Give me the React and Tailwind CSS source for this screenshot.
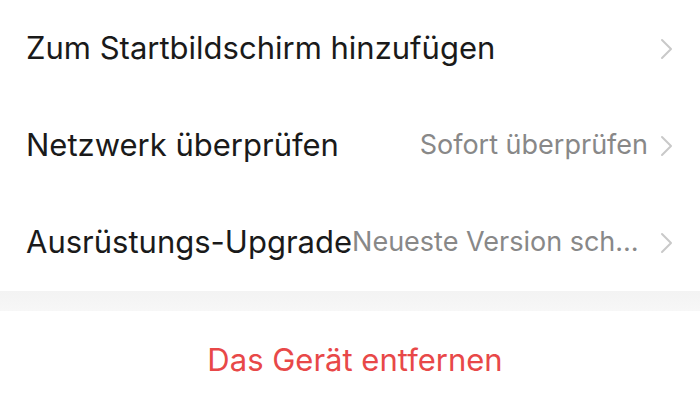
export default function App() {
  const rows = [
    { label: "Zum Startbildschirm hinzufügen", value: "" },
    { label: "Netzwerk überprüfen", value: "Sofort überprüfen" },
    { label: "Ausrüstungs-Upgrade", value: "Neueste Version schon installiert" },
  ];

  return (
    <div className="w-[700px] h-[420px] bg-white overflow-hidden font-['Inter',sans-serif]">
      {/* Settings list */}
      <div className="bg-white">
        {rows.map((row) => (
          <div key={row.label} className="flex items-center h-[97px] pl-[26px] pr-[27px]">
            <span className="shrink-0 text-[31px] text-[#1a1a1a]">{row.label}</span>
            <span className="flex-1 min-w-0 truncate text-right text-[27px] text-[#888888]">
              {row.value}
            </span>
            <svg className="shrink-0 ml-[11px] w-[14px] h-[22px]" viewBox="0 0 14 22" fill="none">
              <path d="M3 2l9 9-9 9" stroke="#c9c9c9" strokeWidth="2" strokeLinecap="round" strokeLinejoin="round" />
            </svg>
          </div>
        ))}
      </div>

      {/* Divider band */}
      <div className="h-[20px] bg-gradient-to-b from-[#f3f3f3] to-[#f7f7f7]" />

      {/* Remove device */}
      <div className="flex items-center justify-center h-[98px] bg-white">
        <span className="text-[31px] text-[#e84848] pl-[10px]">Das Gerät entfernen</span>
      </div>
    </div>
  );
}
